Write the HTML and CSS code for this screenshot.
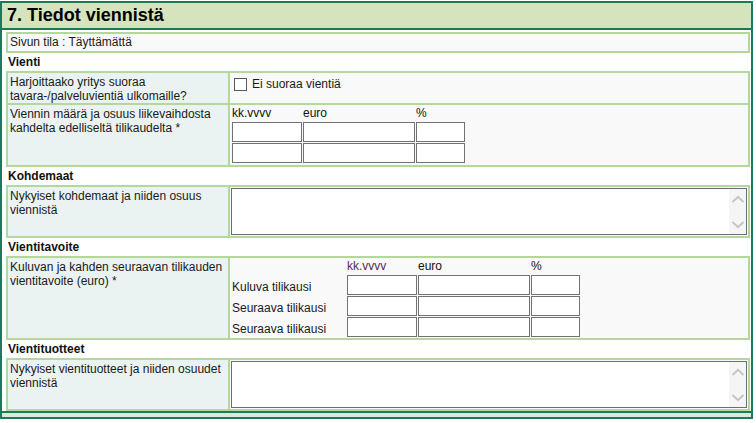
FILE: index.html
```html
<!DOCTYPE html>
<html lang="fi">
<head>
<meta charset="utf-8">
<title>Tiedot viennistä</title>
<link rel="stylesheet" href="styles.css">
</head>
<body>
<div class="panel">
  <h1 class="panel-title">7. Tiedot viennistä</h1>
  <div class="panel-body">
    <div class="status">Sivun tila : Täyttämättä</div>

    <div class="section-title">Vienti</div>
    <table class="form">
      <tr class="row-1">
        <td class="label">Harjoittaako yritys suoraa tavara-/palveluvientiä ulkomaille?</td>
        <td class="value">
          <label class="check"><span class="checkbox"></span>Ei suoraa vientiä</label>
        </td>
      </tr>
      <tr class="row-2">
        <td class="label">Viennin määrä ja osuus liikevaihdosta kahdelta edelliseltä tilikaudelta *</td>
        <td class="value">
          <div class="grid3">
            <span class="colhead">kk.vvvv</span><span class="colhead">euro</span><span class="colhead">%</span>
            <input class="in-date" type="text"><input class="in-euro" type="text"><input class="in-pct" type="text">
            <input class="in-date" type="text"><input class="in-euro" type="text"><input class="in-pct" type="text">
          </div>
        </td>
      </tr>
    </table>

    <div class="section-title">Kohdemaat</div>
    <table class="form">
      <tr class="row-area">
        <td class="label">Nykyiset kohdemaat ja niiden osuus viennistä</td>
        <td class="value area-cell">
          <div class="area">
            <textarea class="area-text"></textarea>
            <div class="scrollbar">
              <svg width="14" height="8" viewBox="0 0 14 8"><path d="M1.5 7 L7 1.8 L12.5 7" fill="none" stroke="#c4c4c4" stroke-width="2"/></svg>
              <svg width="14" height="8" viewBox="0 0 14 8"><path d="M1.5 1 L7 6.2 L12.5 1" fill="none" stroke="#c4c4c4" stroke-width="2"/></svg>
            </div>
          </div>
        </td>
      </tr>
    </table>

    <div class="section-title">Vientitavoite</div>
    <table class="form">
      <tr class="row-4">
        <td class="label">Kuluvan ja kahden seuraavan tilikauden vientitavoite (euro) *</td>
        <td class="value">
          <div class="grid4">
            <span></span><span class="colhead purple">kk.vvvv</span><span class="colhead">euro</span><span class="colhead">%</span>
            <span class="rowlabel">Kuluva tilikausi</span><input class="in-date" type="text"><input class="in-euro" type="text"><input class="in-pct" type="text">
            <span class="rowlabel">Seuraava tilikausi</span><input class="in-date" type="text"><input class="in-euro" type="text"><input class="in-pct" type="text">
            <span class="rowlabel">Seuraava tilikausi</span><input class="in-date" type="text"><input class="in-euro" type="text"><input class="in-pct" type="text">
          </div>
        </td>
      </tr>
    </table>

    <div class="section-title">Vientituotteet</div>
    <table class="form">
      <tr class="row-area">
        <td class="label">Nykyiset vientituotteet ja niiden osuudet viennistä</td>
        <td class="value area-cell">
          <div class="area">
            <textarea class="area-text"></textarea>
            <div class="scrollbar">
              <svg width="14" height="8" viewBox="0 0 14 8"><path d="M1.5 7 L7 1.8 L12.5 7" fill="none" stroke="#c4c4c4" stroke-width="2"/></svg>
              <svg width="14" height="8" viewBox="0 0 14 8"><path d="M1.5 1 L7 6.2 L12.5 1" fill="none" stroke="#c4c4c4" stroke-width="2"/></svg>
            </div>
          </div>
        </td>
      </tr>
    </table>
  </div>
  <div class="panel-footer"></div>
</div>
</body>
</html>
```
FILE: styles.css
```css
html, body {
  margin: 0;
  padding: 0;
  background: #ffffff;
}
body {
  font-family: "Liberation Sans", Arial, sans-serif;
  font-size: 12px;
  color: #1a1a1a;
}
.panel {
  box-sizing: border-box;
  width: 753px;
  margin-top: 1px;
  border: 2px solid #1b7a5c;
  background: #ffffff;
}
.panel-title {
  margin: 0;
  height: 25px;
  line-height: 25px;
  padding-left: 5px;
  font-size: 18px;
  font-weight: bold;
  color: #000;
  background: #d6e4bd;
  border-bottom: 2px solid #1b7a5c;
}
.panel-body {
  padding: 2px 1px 0 4px;
}
.status {
  height: 17px;
  line-height: 17px;
  padding-left: 2px;
  border: 2px solid #b4d89c;
  background: #f9f9f9;
}
.section-title {
  height: 18px;
  line-height: 18px;
  padding-left: 2px;
  font-weight: bold;
  color: #111;
}
.form {
  width: 744px;
  border-collapse: separate;
  border-spacing: 0;
  border-top: 2px solid #b4d89c;
  border-left: 2px solid #b4d89c;
  table-layout: fixed;
}
.form td {
  border-right: 2px solid #b4d89c;
  border-bottom: 2px solid #b4d89c;
  vertical-align: top;
  padding: 0;
}
.form td.label {
  width: 216px;
  padding: 2px 2px 0 2px;
  line-height: 14px;
  background: #eaf3f1;
}
.form td.value {
  background: #f9f9f9;
  padding: 0 2px;
}
.row-1 td { height: 28px; }
.row-2 td { height: 58px; }
.row-4 td { height: 78px; }
.row-area td.label { height: 47px; }

.check {
  display: flex;
  align-items: center;
  gap: 5px;
  margin-top: 4px;
  line-height: 14px;
}
.checkbox {
  display: inline-block;
  box-sizing: border-box;
  width: 13px;
  height: 13px;
  margin-left: 2px;
  border: 1px solid #5a5a5a;
  background: #ffffff;
}

.grid3 {
  display: grid;
  grid-template-columns: 70px 112px 49px;
  grid-template-rows: 15px 20px 20px;
  column-gap: 1px;
  row-gap: 1px;
  padding-top: 1px;
}
.grid4 {
  display: grid;
  grid-template-columns: 114px 70px 112px 49px;
  grid-template-rows: 15px 20px 20px 20px;
  column-gap: 1px;
  row-gap: 1px;
  padding-top: 1px;
}
.colhead {
  line-height: 15px;
  color: #111;
}
.colhead.purple {
  color: #5a2a55;
}
.rowlabel {
  line-height: 20px;
  padding-top: 2px;
  height: 18px;
}
.grid3 input, .grid4 input {
  box-sizing: border-box;
  width: 100%;
  height: 20px;
  margin: 0;
  padding: 0 2px;
  border: 1px solid #727272;
  background: #ffffff;
  font: inherit;
}

.form td.area-cell {
  padding: 1px 1px 0 1px;
}
.area {
  box-sizing: border-box;
  display: flex;
  height: 47px;
  border: 1px solid #6e6e6e;
  background: #ffffff;
}
.area-text {
  flex: 1;
  border: 0;
  margin: 0;
  padding: 2px;
  resize: none;
  outline: none;
  background: #ffffff;
  font: inherit;
  overflow: hidden;
}
.scrollbar {
  width: 17px;
  background: #f5f5f5;
  display: flex;
  flex-direction: column;
  justify-content: space-between;
  align-items: center;
  padding: 6px 0 5px;
}
.scrollbar svg {
  display: block;
}

.panel-footer {
  height: 4px;
  border-top: 2px solid #1b7a5c;
  background: #dce9d6;
}
```
